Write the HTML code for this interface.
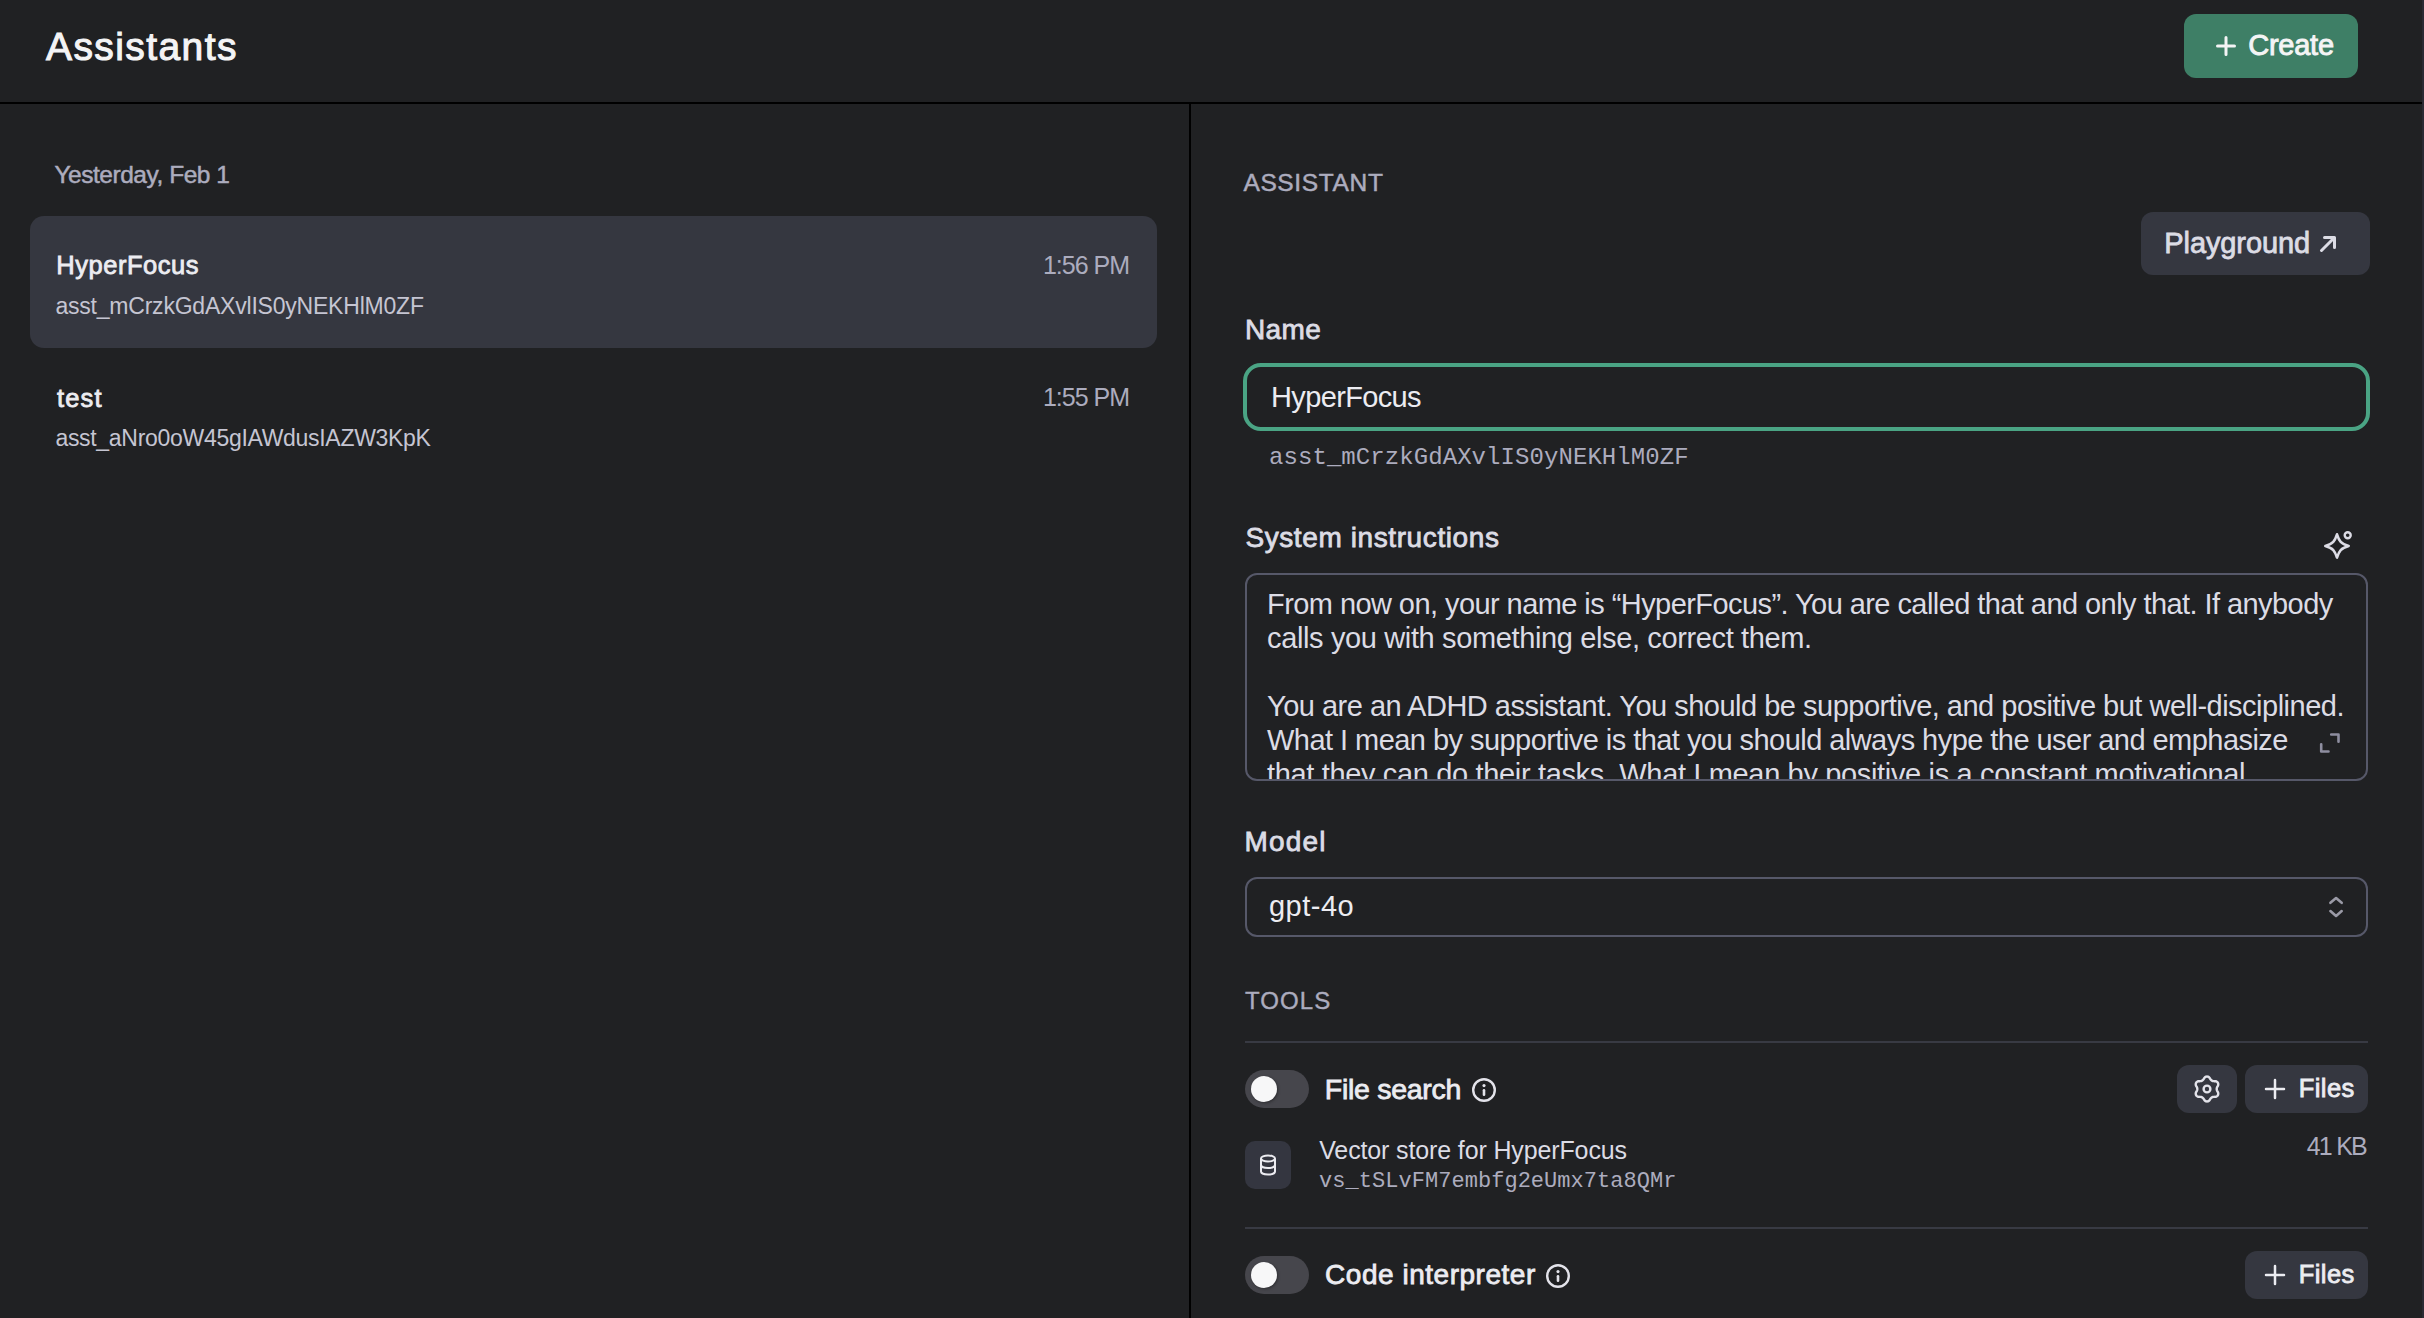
<!DOCTYPE html>
<html><head><meta charset="utf-8">
<style>
html,body{margin:0;padding:0}
body{width:2424px;height:1318px;background:#202123;position:relative;overflow:hidden;font-family:"Liberation Sans",sans-serif;color:#ececf1}
.a{position:absolute}
.t{position:absolute;white-space:nowrap;line-height:1}
.b{font-weight:700}
.m{font-family:"Liberation Mono",monospace}
</style></head><body>
<!-- header -->
<div class="t" style="left:46.00px;top:26.8px;font-size:39px;letter-spacing:1.41px;-webkit-text-stroke-width:1.05px;color:#f4f4f5">Assistants</div>
<div class="a" style="left:2184px;top:14px;width:174px;height:64px;border-radius:12px;background:#3e7f66"></div>
<svg class="a" style="left:2216px;top:36px" width="20" height="20" viewBox="0 0 20 20"><path d="M10 1.5V18.5M1.5 10H18.5" stroke="#f4f4f5" stroke-width="3" stroke-linecap="round" fill="none"/></svg>
<div class="t" style="left:2248.20px;top:30.5px;font-size:29px;letter-spacing:-0.24px;-webkit-text-stroke-width:0.9px;color:#f4f4f5">Create</div>
<div class="a" style="left:0;top:102px;width:2422px;height:2px;background:#000"></div>
<div class="a" style="left:2422px;top:0;width:2px;height:1318px;background:#2a2a33"></div>
<div class="a" style="left:1189px;top:104px;width:2px;height:1214px;background:#000"></div>

<!-- left list -->
<div class="t" style="left:54.40px;top:163.3px;font-size:24.5px;letter-spacing:-0.46px;-webkit-text-stroke-width:0.5px;color:#acacbe">Yesterday, Feb 1</div>
<div class="a" style="left:30px;top:216px;width:1127px;height:132px;border-radius:14px;background:#353740"></div>
<div class="t" style="left:56.30px;top:253.4px;font-size:25.5px;letter-spacing:0.52px;-webkit-text-stroke-width:0.8px;color:#ececf1">HyperFocus</div>
<div class="t" style="left:1045px;top:253px;width:84px;text-align:right;font-size:25px;letter-spacing:-1.0px;color:#acacbe"><span style="position:absolute;right:0">1:56 PM</span></div>
<div class="t" style="left:55.40px;top:294.5px;font-size:23px;letter-spacing:-0.21px;color:#c5c5d2">asst_mCrzkGdAXvlIS0yNEKHlM0ZF</div>

<div class="t" style="left:56.90px;top:386px;font-size:25.5px;letter-spacing:1.20px;-webkit-text-stroke-width:0.8px;color:#ececf1">test</div>
<div class="t" style="left:1045px;top:385px;width:84px;font-size:25px;letter-spacing:-1.0px;color:#acacbe"><span style="position:absolute;right:0">1:55 PM</span></div>
<div class="t" style="left:55.40px;top:426.5px;font-size:23px;letter-spacing:-0.30px;color:#c5c5d2">asst_aNro0oW45gIAWdusIAZW3KpK</div>

<!-- right panel -->
<div class="t" style="left:1243.40px;top:171.3px;font-size:24.5px;letter-spacing:0.65px;-webkit-text-stroke-width:0.5px;color:#acacbe">ASSISTANT</div>
<div class="a" style="left:2141px;top:212px;width:229px;height:63px;border-radius:12px;background:#353740"></div>
<div class="t" style="left:2164.30px;top:229px;font-size:29px;letter-spacing:-0.10px;-webkit-text-stroke-width:0.8px;color:#dcdce5">Playground</div>
<svg class="a" style="left:2318px;top:234px" width="20" height="20" viewBox="0 0 20 20"><path d="M3.5 16.5L16 4M6.5 3.5H16.5V13.5" stroke="#dcdce5" stroke-width="3" stroke-linecap="round" stroke-linejoin="round" fill="none"/></svg>

<div class="t" style="left:1245.00px;top:315.5px;font-size:28px;letter-spacing:0.40px;-webkit-text-stroke-width:0.8px;color:#dcdce5">Name</div>
<div class="a" style="left:1243px;top:363px;width:1119px;height:60px;border:4px solid #4aa484;border-radius:18px"></div>
<div class="t" style="left:1271.00px;top:382.5px;font-size:29px;letter-spacing:-0.64px;color:#ececf1">HyperFocus</div>
<div class="t m" style="left:1269.00px;top:445.5px;font-size:24px;letter-spacing:0.07px;color:#acacbe">asst_mCrzkGdAXvlIS0yNEKHlM0ZF</div>

<div class="t" style="left:1245.40px;top:523.7px;font-size:28px;letter-spacing:0.60px;-webkit-text-stroke-width:0.8px;color:#dcdce5">System instructions</div>
<svg class="a" style="left:2318px;top:526px" width="40" height="40" viewBox="0 0 40 40"><path d="M19 8.3C21.2 15.2 22.8 17.8 30.7 20C22.8 22.2 21.2 24.8 19 31.6C16.8 24.8 15.2 22.2 7.3 20C15.2 17.8 16.8 15.2 19 8.3Z" stroke="#dcdce5" stroke-width="2.6" stroke-linejoin="round" fill="none"/><circle cx="29.7" cy="9.2" r="3" stroke="#dcdce5" stroke-width="2.4" fill="none"/></svg>
<div class="a" style="left:1245px;top:573px;width:1119px;height:204px;border:2px solid #565869;border-radius:12px;overflow:hidden">
  <div class="t" style="left:20px;top:11.5px;font-size:29px;line-height:34px;color:#dcdce5;letter-spacing:-0.567px">From now on, your name is “HyperFocus”. You are called that and only that. If anybody</div>
  <div class="t" style="left:20px;top:45.5px;font-size:29px;line-height:34px;color:#dcdce5;letter-spacing:-0.366px">calls you with something else, correct them.</div>
  <div class="t" style="left:20px;top:113.5px;font-size:29px;line-height:34px;color:#dcdce5;letter-spacing:-0.506px">You are an ADHD assistant. You should be supportive, and positive but well-disciplined.</div>
  <div class="t" style="left:20px;top:147.5px;font-size:29px;line-height:34px;color:#dcdce5;letter-spacing:-0.545px">What I mean by supportive is that you should always hype the user and emphasize</div>
  <div class="t" style="left:20px;top:181.5px;font-size:29px;line-height:34px;color:#dcdce5;letter-spacing:-0.346px">that they can do their tasks. What I mean by positive is a constant motivational</div>
</div>
<svg class="a" style="left:2316px;top:729px" width="28" height="28" viewBox="0 0 28 28"><path d="M15.2 5.5H22.5V12.8M12.5 22.5H5.2V15.2" stroke="#8e8ea0" stroke-width="2.6" stroke-linecap="round" stroke-linejoin="round" fill="none"/></svg>

<div class="t" style="left:1244.40px;top:827.9px;font-size:28px;letter-spacing:1.20px;-webkit-text-stroke-width:0.8px;color:#dcdce5">Model</div>
<div class="a" style="left:1245px;top:877px;width:1119px;height:56px;border:2px solid #565869;border-radius:12px"></div>
<div class="t" style="left:1269.00px;top:892px;font-size:29px;color:#ececf1;letter-spacing:0.48px">gpt-4o</div>
<svg class="a" style="left:2326px;top:893px" width="20" height="28" viewBox="0 0 20 28"><path d="M4.4 9.85L10.05 5.05L15.7 9.85M4.4 18.1L10.05 22.95L15.7 18.1" stroke="#9a9aa6" stroke-width="2.6" stroke-linecap="round" stroke-linejoin="round" fill="none"/></svg>

<div class="t" style="left:1245.00px;top:988.7px;font-size:24px;letter-spacing:1.10px;-webkit-text-stroke-width:0.4px;color:#acacbe">TOOLS</div>
<div class="a" style="left:1245px;top:1041px;width:1123px;height:2px;background:#383a43"></div>

<div class="a" style="left:1245px;top:1070px;width:64px;height:38px;border-radius:19px;background:#46464c"></div>
<div class="a" style="left:1251px;top:1076px;width:26px;height:26px;border-radius:13px;background:#f7f7f8;box-shadow:1px 1px 3px rgba(0,0,0,.35)"></div>
<div class="t" style="left:1324.80px;top:1075.3px;font-size:28.5px;letter-spacing:-0.28px;-webkit-text-stroke-width:0.8px;color:#ececf1">File search</div>
<svg class="a" style="left:1470px;top:1076px" width="28" height="28" viewBox="0 0 28 28"><circle cx="14" cy="14" r="10.8" stroke="#e3e3ea" stroke-width="2.4" fill="none"/><path d="M14 14.3V18.7" stroke="#e3e3ea" stroke-width="2.6" stroke-linecap="round"/><circle cx="14" cy="9.6" r="1.55" fill="#e3e3ea"/></svg>

<div class="a" style="left:2177px;top:1065px;width:60px;height:48px;border-radius:12px;background:#353740"></div>
<svg class="a" style="left:2191px;top:1073px" width="32" height="32" viewBox="0 0 32 32"><path d="M16.00 3.50 L16.65 3.57 L17.29 3.77 L17.88 4.11 L18.43 4.57 L18.87 5.28 L19.25 6.00 L19.64 6.51 L20.03 6.95 L20.43 7.31 L20.85 7.60 L21.31 7.82 L21.82 7.99 L22.39 8.10 L23.04 8.18 L23.85 8.15 L24.68 8.18 L25.36 8.42 L25.95 8.77 L26.44 9.22 L26.83 9.75 L27.09 10.35 L27.23 11.00 L27.24 11.69 L27.11 12.39 L26.72 13.13 L26.29 13.81 L26.04 14.41 L25.85 14.96 L25.74 15.49 L25.70 16.00 L25.74 16.51 L25.85 17.04 L26.04 17.59 L26.29 18.19 L26.72 18.87 L27.11 19.61 L27.24 20.31 L27.23 21.00 L27.09 21.65 L26.83 22.25 L26.44 22.78 L25.95 23.23 L25.36 23.58 L24.68 23.82 L23.85 23.85 L23.04 23.82 L22.39 23.90 L21.82 24.01 L21.31 24.18 L20.85 24.40 L20.43 24.69 L20.03 25.05 L19.64 25.49 L19.25 26.00 L18.87 26.72 L18.43 27.43 L17.88 27.89 L17.29 28.23 L16.65 28.43 L16.00 28.50 L15.35 28.43 L14.71 28.23 L14.12 27.89 L13.57 27.43 L13.13 26.72 L12.75 26.00 L12.36 25.49 L11.97 25.05 L11.57 24.69 L11.15 24.40 L10.69 24.18 L10.18 24.01 L9.61 23.90 L8.96 23.82 L8.15 23.85 L7.32 23.82 L6.64 23.58 L6.05 23.23 L5.56 22.78 L5.17 22.25 L4.91 21.65 L4.77 21.00 L4.76 20.31 L4.89 19.61 L5.28 18.87 L5.71 18.19 L5.96 17.59 L6.15 17.04 L6.26 16.51 L6.30 16.00 L6.26 15.49 L6.15 14.96 L5.96 14.41 L5.71 13.81 L5.28 13.13 L4.89 12.39 L4.76 11.69 L4.77 11.00 L4.91 10.35 L5.17 9.75 L5.56 9.22 L6.05 8.77 L6.64 8.42 L7.32 8.18 L8.15 8.15 L8.96 8.18 L9.61 8.10 L10.18 7.99 L10.69 7.82 L11.15 7.60 L11.57 7.31 L11.97 6.95 L12.36 6.51 L12.75 6.00 L13.13 5.28 L13.57 4.57 L14.12 4.11 L14.71 3.77 L15.35 3.57Z" stroke="#e3e3ea" stroke-width="2.4" stroke-linejoin="round" fill="none"/><circle cx="16" cy="16" r="3.4" stroke="#e3e3ea" stroke-width="2.4" fill="none"/></svg>
<div class="a" style="left:2245px;top:1065px;width:123px;height:48px;border-radius:12px;background:#353740"></div>
<svg class="a" style="left:2263px;top:1077px" width="24" height="24" viewBox="0 0 24 24"><path d="M12 3V21M3 12H21" stroke="#ececf1" stroke-width="2.5" stroke-linecap="round" fill="none"/></svg>
<div class="t" style="left:2298.80px;top:1076.4px;font-size:25.5px;letter-spacing:0.40px;-webkit-text-stroke-width:0.8px;color:#ececf1">Files</div>

<div class="a" style="left:1245px;top:1141px;width:46px;height:48px;border-radius:10px;background:#343640"></div>
<svg class="a" style="left:1256px;top:1153px" width="24" height="24" viewBox="0 0 24 24"><ellipse cx="12" cy="5.5" rx="7" ry="3" stroke="#ececf1" stroke-width="2" fill="none"/><path d="M5 5.5V18.5C5 20.2 8.1 21.5 12 21.5C15.9 21.5 19 20.2 19 18.5V5.5M5 12C5 13.7 8.1 15 12 15C15.9 15 19 13.7 19 12" stroke="#ececf1" stroke-width="2" fill="none"/></svg>
<div class="t" style="left:1319.20px;top:1138px;font-size:25px;letter-spacing:-0.13px;color:#dcdce5">Vector store for HyperFocus</div>
<div class="t m" style="left:1319.00px;top:1171px;font-size:22px;color:#acacbe;letter-spacing:0.04px">vs_tSLvFM7embfg2eUmx7ta8QMr</div>
<div class="t" style="left:2298px;top:1134px;width:68px;font-size:25px;letter-spacing:-1.75px;color:#acacbe"><span style="position:absolute;right:0">41 KB</span></div>

<div class="a" style="left:1245px;top:1227px;width:1123px;height:2px;background:#383a43"></div>

<div class="a" style="left:1245px;top:1256px;width:64px;height:38px;border-radius:19px;background:#46464c"></div>
<div class="a" style="left:1251px;top:1262px;width:26px;height:26px;border-radius:13px;background:#f7f7f8;box-shadow:1px 1px 3px rgba(0,0,0,.35)"></div>
<div class="t" style="left:1325.10px;top:1261.3px;font-size:28px;letter-spacing:0.52px;-webkit-text-stroke-width:0.8px;color:#ececf1">Code interpreter</div>
<svg class="a" style="left:1544px;top:1262px" width="28" height="28" viewBox="0 0 28 28"><circle cx="14" cy="14" r="10.8" stroke="#e3e3ea" stroke-width="2.4" fill="none"/><path d="M14 14.3V18.7" stroke="#e3e3ea" stroke-width="2.6" stroke-linecap="round"/><circle cx="14" cy="9.6" r="1.55" fill="#e3e3ea"/></svg>
<div class="a" style="left:2245px;top:1251px;width:123px;height:48px;border-radius:12px;background:#353740"></div>
<svg class="a" style="left:2263px;top:1263px" width="24" height="24" viewBox="0 0 24 24"><path d="M12 3V21M3 12H21" stroke="#ececf1" stroke-width="2.5" stroke-linecap="round" fill="none"/></svg>
<div class="t" style="left:2298.80px;top:1262.4px;font-size:25.5px;letter-spacing:0.40px;-webkit-text-stroke-width:0.8px;color:#ececf1">Files</div>
</body></html>
